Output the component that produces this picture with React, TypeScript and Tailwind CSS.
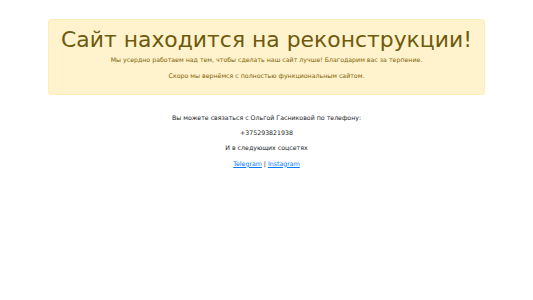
export default function App() {
  return (
    <div className="min-h-screen bg-white px-[48px] pt-[19px] font-['DejaVu_Sans',sans-serif] text-[#212529]">
      <div className="flex flex-col items-center rounded-[3px] border border-[#ffeeba] bg-[#fff3cd] pt-[6px] pb-[13px] text-[#856404]">
        <h1 className="text-[21.9px] leading-[27.6px] text-[#6e5a0c]">
          Сайт находится на реконструкции!
        </h1>
        <p className="mt-[1.5px] text-[6.25px] leading-[9.4px]">
          Мы усердно работаем над тем, чтобы сделать наш сайт лучше! Благодарим вас за терпение.
        </p>
        <p className="mt-[6.6px] text-[6.25px] leading-[9.4px]">
          Скоро мы вернёмся с полностью функциональным сайтом.
        </p>
      </div>
      <div className="mt-[18px] flex flex-col items-center gap-[6px] text-[6.25px] leading-[9.4px]">
        <p>Вы можете связаться с Ольгой Гасниковой по телефону:</p>
        <p>+375293821938</p>
        <p>И в следующих соцсетях</p>
        <p>
          <a href="#" className="text-[#007bff] underline">Telegram</a> |{" "}
          <a href="#" className="text-[#007bff] underline">Instagram</a>
        </p>
      </div>
    </div>
  );
}
